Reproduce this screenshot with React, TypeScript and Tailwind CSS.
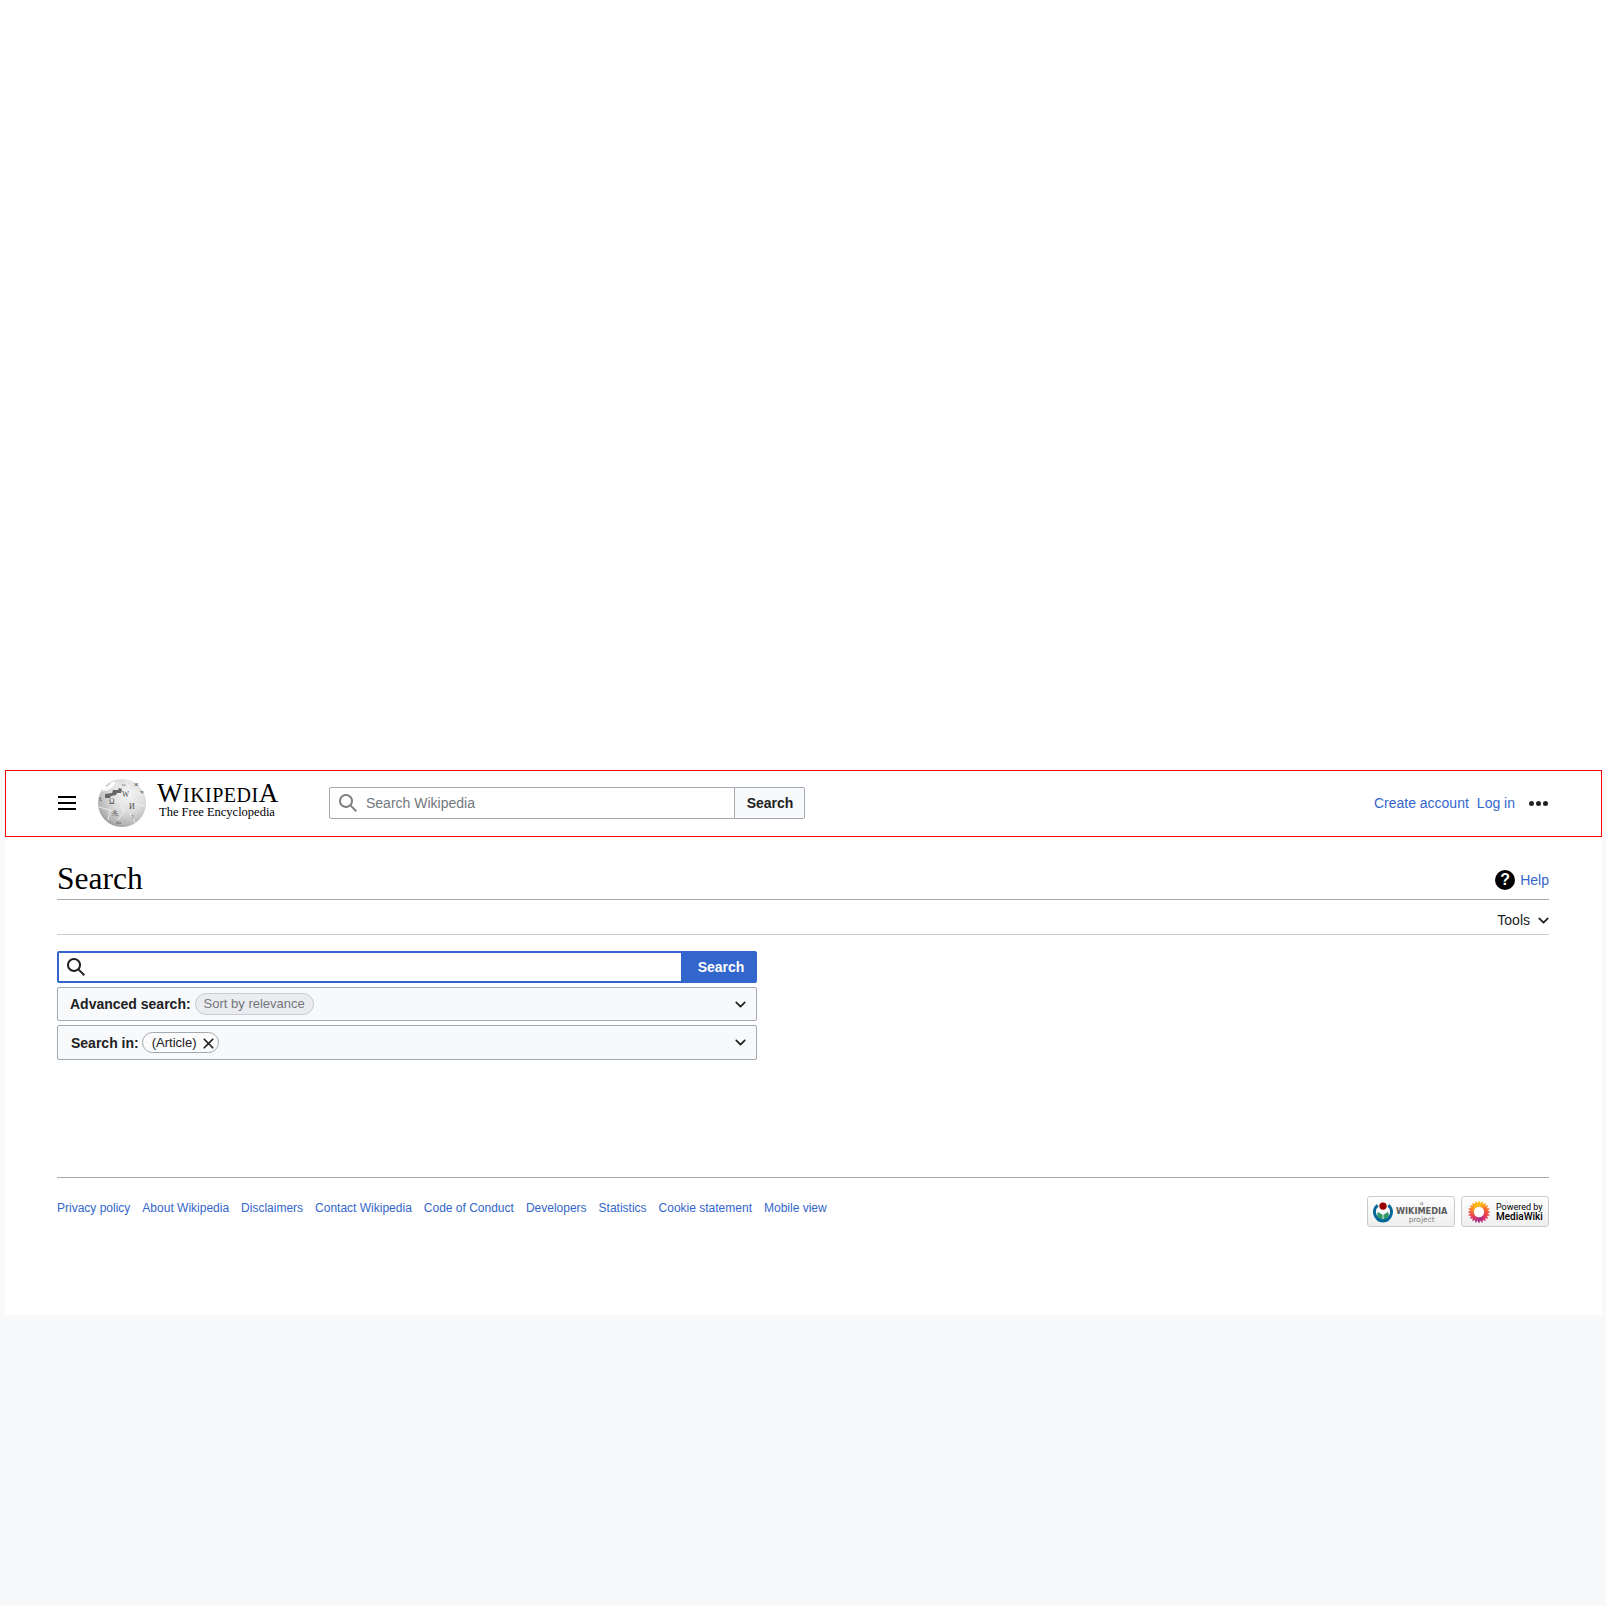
import { ChevronDown, X } from 'lucide-react'

const footerLinks = [
  'Privacy policy',
  'About Wikipedia',
  'Disclaimers',
  'Contact Wikipedia',
  'Code of Conduct',
  'Developers',
  'Statistics',
  'Cookie statement',
  'Mobile view',
]

const SearchIcon = ({ className }: { className?: string }) => (
  <svg viewBox="0 0 20 20" className={className} fill="currentColor">
    <path d="M12.2 13.6a7 7 0 1 1 1.4-1.4l5.4 5.4-1.4 1.4zM3 8a5 5 0 1 0 10 0A5 5 0 0 0 3 8" />
  </svg>
)

function Globe() {
  const serif = "'Liberation Serif', serif"
  return (
    <svg viewBox="0 0 50 48" className="w-[50px] h-[48px] shrink-0">
      <defs>
        <radialGradient id="globe" cx="0.62" cy="0.32" r="0.75">
          <stop offset="0" stopColor="#f6f6f6" />
          <stop offset="0.5" stopColor="#dcdcdc" />
          <stop offset="0.85" stopColor="#b4b4b4" />
          <stop offset="1" stopColor="#8e8e8e" />
        </radialGradient>
      </defs>
      <circle cx="25" cy="24" r="24" fill="url(#globe)" />
      {/* missing puzzle pieces at the top */}
      <path d="M3 10l4-4 3 2 5-5 4 0-3 5-5 3-2 1z" fill="#ffffff" />
      <path d="M5 13l8-6M12 20l11 3 4 10-7 9M29 1l4 11 14 4M21 3l-3 10M35 24l13 3M33 34l5 10M2 28l11 3-2 10M24 22l10-8M13 31l7 2" stroke="#f0f0f0" strokeWidth="0.9" fill="none" />
      <path d="M8 15l7-1 1-3 5 0 1-2 3 1-1 4-4 0-1 2-5 1-1 2-5 0z" fill="#666666" />
      <g fontFamily={serif} fill="#454545">
        <text x="12" y="25" fontSize="7.500">Ω</text>
        <text x="25" y="18" fontSize="7.500">W</text>
        <text x="32" y="30" fontSize="8">И</text>
        <text x="15" y="36" fontSize="6">兆</text>
        <text x="37" y="7" fontSize="5">Ж</text>
        <text x="25" y="7" fontSize="5">ω</text>
        <text x="43" y="15" fontSize="5">भ</text>
        <text x="2" y="21" fontSize="5">ع</text>
        <text x="34" y="40" fontSize="6">?</text>
        <text x="19" y="45" fontSize="4.500">Zu</text>
      </g>
    </svg>
  )
}

function WikimediaBadge() {
  return (
    <div className="w-[88px] h-[31px] rounded-[3px] border border-[#c8ccd1] bg-gradient-to-b from-white to-[#eeeeee] flex items-center pl-[4px] gap-[2px]">
      <svg viewBox="0 0 24 24" className="w-[22px] h-[22px] shrink-0">
        <circle cx="12" cy="5.500" r="4" fill="#990000" />
        <path d="M11.500 21a6 6 0 0 1-5-9l5 3zM12.500 21a6 6 0 0 0 5-9l-5 3z" fill="#339966" />
        <path d="M5 3.500a11.500 11.500 0 0 0 7 20 11.500 11.500 0 0 0 7-20l-2.300 2.300a8 8 0 0 1-4.700 14.200A8 8 0 0 1 7.300 5.800z" fill="#006699" />
      </svg>
      <div className="flex flex-col items-center text-[#54595d] font-['DejaVu_Sans',sans-serif]">
        <span className="text-[6px] leading-[6px] text-[#777]">a</span>
        <span className="text-[8.200px] font-bold leading-[10px] text-[#5a5a5a]">WIKIMEDIA</span>
        <span className="text-[7.500px] leading-[8px] text-[#808080]">project</span>
      </div>
    </div>
  )
}

function MediaWikiBadge() {
  const petals = Array.from({ length: 20 }, (_, i) => i * 18)
  const colors = [
    '#fdb813', '#fdb813', '#fca721', '#fb8d2b', '#f8702f', '#f4593a', '#ee4840', '#e63d57', '#d9366f', '#c0337f',
    '#a5338a', '#b6337f', '#cc3672', '#de3d62', '#ea4a52', '#f15d42', '#f67636', '#fa8e2c', '#fca423', '#fdb813',
  ]
  return (
    <div className="w-[88px] h-[31px] rounded-[3px] border border-[#c8ccd1] bg-gradient-to-b from-white to-[#eeeeee] flex items-center pl-[5px] gap-[5px]">
      <svg viewBox="0 0 24 24" className="w-[24px] h-[24px] shrink-0">
        {petals.map((a, i) => (
          <path key={a} d="M12 0.500l2.800 5.500 -0.800 3h-4l-0.800-3z" fill={colors[i]} transform={`rotate(${a} 12 12)`} />
        ))}
        <circle cx="12" cy="12" r="5.200" fill="#fdfdfd" />
      </svg>
      <div className="flex flex-col text-black font-['Roboto',sans-serif]">
        <span className="text-[9px] leading-[10px]">Powered by</span>
        <span className="font-medium text-[10px] leading-[10px]">MediaWiki</span>
      </div>
    </div>
  )
}

export default function App() {
  return (
    <div className="min-h-[1606px] bg-[#f8f9fa] font-['Liberation_Sans',sans-serif] text-[#202122]">
      <div className="h-[770px] bg-white" />
      <div className="ml-[5px] mr-[4px] h-[545px] bg-white">
        {/* Header, outlined red in the shot */}
        <header className="h-[67px] border border-[#ff0000] flex items-center pl-[52px] pr-[53px] pb-[1px]">
          <div className="flex flex-col gap-[4px] w-[18px]">
            <span className="h-[2px] bg-black" />
            <span className="h-[2px] bg-black" />
            <span className="h-[2px] bg-black" />
          </div>
          <div className="ml-[21px] flex items-center">
            <Globe />
            <div className="ml-[10px] pb-[7px] font-['Liberation_Serif',serif] text-black w-[122px]">
              <div className="text-[27px] leading-[23px] whitespace-nowrap tracking-[0.5px]">
                W<span className="text-[20px]">IKIPEDI</span>A
              </div>
              <div className="text-[12.500px] leading-[11px] ml-[2px] whitespace-nowrap">The Free Encyclopedia</div>
            </div>
          </div>
          <div className="ml-[50px] flex h-[32px] w-[476px]">
            <div className="flex-1 flex items-center border border-[#a2a9b1] rounded-l-[2px] bg-white pl-[8px]">
              <SearchIcon className="w-[20px] h-[20px] text-[#808080]" />
              <span className="ml-[8px] text-[14px] text-[#72777d]">Search Wikipedia</span>
            </div>
            <div className="w-[70px] pl-[1px] flex items-center justify-center border border-l-0 border-[#a2a9b1] rounded-r-[2px] bg-[#f8f9fa] text-[14px] font-bold">
              Search
            </div>
          </div>
          <div className="ml-auto flex items-center">
            <a className="text-[14px] text-[#3366cc]">Create account</a>
            <a className="ml-[8px] text-[14px] text-[#3366cc]">Log in</a>
            <div className="ml-[14px] flex gap-[2px]">
              <span className="w-[5px] h-[5px] rounded-full bg-[#202122]" />
              <span className="w-[5px] h-[5px] rounded-full bg-[#202122]" />
              <span className="w-[5px] h-[5px] rounded-full bg-[#202122]" />
            </div>
          </div>
        </header>

        <main className="pl-[52px] pr-[53px]">
          <div className="h-[63px] border-b border-[#a2a9b1] flex items-end justify-between">
            <h1 className="font-['Liberation_Serif',serif] text-[31.500px] leading-[38px] mb-[1px] text-black">Search</h1>
            <div className="flex items-start gap-[5px] mb-[8px]">
              <span className="mt-[1px] w-[20px] h-[20px] rounded-full bg-black text-white text-[16px] font-bold flex items-center justify-center">?</span>
              <a className="pt-[1px] text-[14px] text-[#3366cc]">Help</a>
            </div>
          </div>
          <div className="h-[35px] pt-[6px] border-b border-[#c8ccd1] flex items-center justify-end gap-[5px] text-[14px]">
            Tools
            <ChevronDown className="w-[17px] h-[17px] -mr-[3px] text-[#202122]" strokeWidth={2.400} />
          </div>

          <div className="w-[700px] mt-[16px]">
            <div className="flex h-[32px]">
              <div className="flex-1 border-2 border-[#3366cc] rounded-l-[2px] bg-white flex items-center pl-[7px]">
                <SearchIcon className="w-[20px] h-[20px] text-[#202122]" />
              </div>
              <div className="w-[74px] pl-[2px] rounded-r-[2px] bg-[#3366cc] text-white text-[14px] font-bold flex items-center justify-center">
                Search
              </div>
            </div>
            <div className="mt-[4px] h-[34px] border border-[#a2a9b1] rounded-[2px] bg-[#f8f9fa] flex items-center pl-[12px] pr-[7px]">
              <span className="text-[14px] font-bold">Advanced search:</span>
              <span className="ml-[4px] h-[22px] px-[8px] rounded-full border border-[#c8ccd1] bg-[#eaecf0] text-[13px] text-[#72777d] flex items-center">
                Sort by relevance
              </span>
              <ChevronDown className="ml-auto w-[17px] h-[17px] text-[#202122]" strokeWidth={2.400} />
            </div>
            <div className="mt-[4px] h-[35px] border border-[#a2a9b1] rounded-[2px] bg-[#f8f9fa] flex items-center pl-[13px] pr-[7px]">
              <span className="pt-[2px] text-[14px] font-bold">Search in:</span>
              <span className="ml-[3px] h-[21px] pl-[9px] pr-[1px] pt-[1px] rounded-full border border-[#a2a9b1] bg-white/40 text-[13px] flex items-center gap-[4px]">
                (Article)
                <X className="w-[17px] h-[17px] text-[#202122]" strokeWidth={2.400} />
              </span>
              <ChevronDown className="ml-auto w-[17px] h-[17px] text-[#202122]" strokeWidth={2.400} />
            </div>
          </div>
        </main>

        <footer className="ml-[52px] mr-[53px] mt-[117px] border-t border-[#a2a9b1] pt-[20px] flex justify-between">
          <ul className="flex gap-[12px] text-[12px] leading-[20px] text-[#3366cc]">
            {footerLinks.map(link => (
              <li key={link}>{link}</li>
            ))}
          </ul>
          <div className="flex gap-[6px] -mt-[2px]">
            <WikimediaBadge />
            <MediaWikiBadge />
          </div>
        </footer>
      </div>
    </div>
  )
}
